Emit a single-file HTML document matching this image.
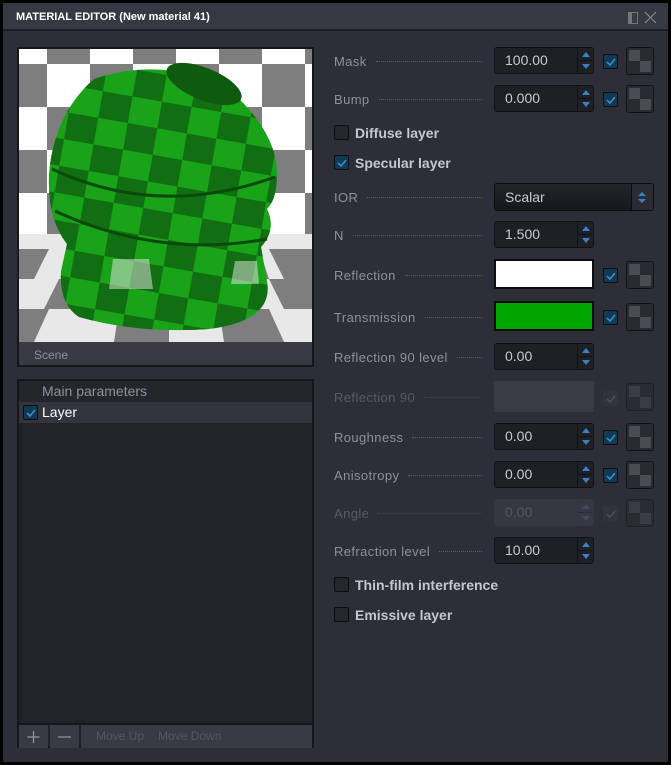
<!DOCTYPE html>
<html><head><meta charset="utf-8"><style>
*{box-sizing:border-box;margin:0;padding:0}
body{width:671px;height:765px;background:#000;font-family:"Liberation Sans",sans-serif;overflow:hidden;position:relative}
.win{position:absolute;left:3px;top:3px;width:665px;height:759px;background:#2d2e37}
.title{position:absolute;left:0;top:0;width:665px;height:28px;background:#373842;border-bottom:2px solid #1c1d22;color:#fff;font-weight:bold;font-size:11px;line-height:28px;padding-left:13px}
.a{position:absolute}
.lbl{position:absolute;left:334px;width:148px;font-size:13px;letter-spacing:.4px;color:#8e909a;display:flex;align-items:center;height:20px;white-space:nowrap}
.lbl:after{content:"";flex:1;margin-left:9px;border-top:1px dotted #5b5d66;height:0;margin-top:1px}
.inp{position:absolute;left:494px;width:100px;height:27px;background:#1f2026;border:1px solid #121317;border-radius:3px;color:#c9cad0;font-size:14px;line-height:25px;padding-left:10px}
.spin{position:absolute;right:0;top:0;width:16px;height:25px;border-left:1px solid #121317}
.spin:before{content:"";position:absolute;left:4px;top:4px;border:4px solid transparent;border-bottom:5px solid #3b7fc4;border-top:0}
.spin:after{content:"";position:absolute;left:4px;bottom:4px;border:4px solid transparent;border-top:5px solid #3b7fc4;border-bottom:0}
.spin i{position:absolute;left:0;right:0;top:12px;border-top:1px solid #121317}
.cb{position:absolute;width:15px;height:15px;background:#123a52;border:1px solid #0c0d10;border-radius:2px}
.cb svg{position:absolute;left:1px;top:1px}
.cb.off{background:#26272d}
.tex{position:absolute;left:626px;width:28px;height:28px;border:1px solid #121317;border-radius:3px;background:#2a2b31;overflow:hidden}
.tex:before{content:"";position:absolute;left:2px;top:2px;width:11px;height:11px;background:#4a4b53}
.tex:after{content:"";position:absolute;left:13px;top:13px;width:11px;height:11px;background:#4a4b53}
.dis{opacity:.45}
.big{position:absolute;left:355px;font-size:14px;font-weight:bold;color:#c6c7cc}
</style></head><body>
<div class="win">
<div class="title">MATERIAL EDITOR (New material 41)
<div class="a" style="left:625px;top:9px;width:10px;height:12px;border:1px solid #777;border-left:4px solid #777"></div>
<svg class="a" style="left:641px;top:8px" width="13" height="13"><path d="M1 1L12 12M12 1L1 12" stroke="#888" stroke-width="1.2"/></svg>
</div>
</div>
<!-- preview -->
<div class="a" style="left:17px;top:47px;width:297px;height:320px;background:#393a44;border:2px solid #16171b">
<svg width="293" height="293" style="display:block;background:#fff">
<defs>
<pattern id="ck" width="86" height="86" patternUnits="userSpaceOnUse" x="28" y="-28"><rect width="43" height="43" fill="#7e7e7e"/><rect x="43" y="43" width="43" height="43" fill="#7e7e7e"/></pattern>
<pattern id="ck2" width="60" height="54" patternUnits="userSpaceOnUse" patternTransform="rotate(10)"><rect width="30" height="27" fill="#126e12"/><rect x="30" y="27" width="30" height="27" fill="#126e12"/></pattern>
</defs>
<rect width="293" height="293" fill="url(#ck)"/>
<rect y="185" width="293" height="108" fill="#e8e8e8"/>
<g fill="#7e7e7e"><polygon points="0,200 30,200 15,230 0,230"/><polygon points="60,200 100,200 90,230 45,230"/><polygon points="0,260 30,260 15,293 0,293"/><polygon points="100,260 150,260 150,293 95,293"/><polygon points="200,260 250,260 265,293 205,293"/><polygon points="250,200 293,200 293,230 265,230"/><polygon points="190,200 240,200 250,230 200,230"/><polygon points="40,230 90,230 80,260 25,260"/><polygon points="150,230 200,230 205,260 150,260"/><polygon points="250,230 293,230 293,260 265,260"/></g>
<path d="M75 30 Q150 5 215 45 Q258 85 258 125 Q258 150 248 160 Q258 180 242 198 L248 232 Q255 272 190 280 Q120 285 60 268 Q40 255 42 222 L48 195 Q28 170 30 125 Q35 65 75 30Z" fill="#18a318"/>
<path d="M75 30 Q150 5 215 45 Q258 85 258 125 Q258 150 248 160 Q258 180 242 198 L248 232 Q255 272 190 280 Q120 285 60 268 Q40 255 42 222 L48 195 Q28 170 30 125 Q35 65 75 30Z" fill="url(#ck2)"/>
<ellipse cx="185" cy="35" rx="40" ry="16" transform="rotate(22 185 35)" fill="#0e5a0e"/>
<path d="M33 120 Q140 170 256 128 M36 162 Q140 210 248 190" stroke="#0a4a0a" stroke-width="3" fill="none"/>
<path d="M90 240 L94 210 L130 210 L134 240Z M212 235 L216 212 L238 212 L240 235Z" fill="#e8e8e8" opacity=".5"/>
</svg>
<div style="color:#8e909a;font-size:12px;padding:6px 0 0 15px">Scene</div>
</div>
<!-- list -->
<div class="a" style="left:17px;top:379px;width:297px;height:369px;background:#222328;border:2px solid #16171b">
<div style="height:21px;background:#25262c;color:#8e909a;font-size:14px;line-height:21px;padding-left:23px">Main parameters</div>
<div style="height:21px;background:#33343e;color:#fff;font-size:14px;line-height:21px;padding-left:23px;position:relative">Layer
<div class="cb" style="left:4px;top:3px"><svg width="12" height="12"><path d="M2 6L5 9L10 3" stroke="#3b8fd6" stroke-width="1.5" fill="none"/></svg></div></div>
<div class="a" style="left:0;top:342px;width:293px;height:2px;background:#16171b"></div>
<div class="a" style="left:0;top:344px;width:29px;height:23px;background:#393a44"><svg width="29" height="23"><path d="M14.5 6V18M8.5 12H20.5" stroke="#999" stroke-width="1.2"/></svg></div>
<div class="a" style="left:31px;top:344px;width:29px;height:23px;background:#393a44"><svg width="29" height="23"><path d="M8 12H21" stroke="#999" stroke-width="1.2"/></svg></div>
<div class="a" style="left:62px;top:344px;width:231px;height:23px;background:#393a44;color:#55565f;font-size:12px;line-height:23px;padding-left:15px"><span>Move Up</span><span style="margin-left:14px">Move Down</span></div>
</div>

<!-- right -->
<div class="lbl" style="top:51px">Mask</div>
<div class="inp" style="top:47px">100.00<div class="spin"><i></i></div></div>
<div class="cb" style="left:603px;top:54px"><svg width="12" height="12"><path d="M2 6L5 9L10 3" stroke="#3b8fd6" stroke-width="1.5" fill="none"/></svg></div>
<div class="tex" style="top:47px"></div>

<div class="lbl" style="top:89px">Bump</div>
<div class="inp" style="top:85px">0.000<div class="spin"><i></i></div></div>
<div class="cb" style="left:603px;top:92px"><svg width="12" height="12"><path d="M2 6L5 9L10 3" stroke="#3b8fd6" stroke-width="1.5" fill="none"/></svg></div>
<div class="tex" style="top:85px"></div>

<div class="cb off" style="left:334px;top:125px"></div><div class="big" style="top:125px">Diffuse layer</div>
<div class="cb" style="left:334px;top:155px"><svg width="12" height="12"><path d="M2 6L5 9L10 3" stroke="#3b8fd6" stroke-width="1.5" fill="none"/></svg></div><div class="big" style="top:155px">Specular layer</div>

<div class="lbl" style="top:187px">IOR</div>
<div class="a" style="left:494px;top:183px;width:160px;height:28px;background:linear-gradient(#24252b,#17181c);border:1px solid #0c0d10;border-radius:3px;color:#c9cad0;font-size:14px;line-height:26px;padding-left:10px">Scalar
<div class="a" style="right:0;top:0;width:22px;height:26px;border-left:1px solid #0c0d10;background:#2a2b33"></div>
<svg class="a" style="right:6px;top:7px" width="10" height="13"><path d="M1 5L5 1L9 5ZM1 8L5 12L9 8Z" fill="#3b7fc4"/></svg></div>

<div class="lbl" style="top:225px">N</div>
<div class="inp" style="top:221px">1.500<div class="spin"><i></i></div></div>

<div class="lbl" style="top:265px">Reflection</div>
<div class="a" style="left:494px;top:259px;width:100px;height:30px;background:#fff;border:2px solid #0c0d10"></div>
<div class="cb" style="left:603px;top:268px"><svg width="12" height="12"><path d="M2 6L5 9L10 3" stroke="#3b8fd6" stroke-width="1.5" fill="none"/></svg></div>
<div class="tex" style="top:261px"></div>

<div class="lbl" style="top:307px">Transmission</div>
<div class="a" style="left:494px;top:301px;width:100px;height:30px;background:#00a500;border:2px solid #0c0d10"></div>
<div class="cb" style="left:603px;top:310px"><svg width="12" height="12"><path d="M2 6L5 9L10 3" stroke="#3b8fd6" stroke-width="1.5" fill="none"/></svg></div>
<div class="tex" style="top:303px"></div>

<div class="lbl" style="top:347px">Reflection 90 level</div>
<div class="inp" style="top:343px">0.00<div class="spin"><i></i></div></div>

<div class="lbl dis" style="top:387px">Reflection 90</div>
<div class="a" style="left:494px;top:381px;width:100px;height:31px;background:#3a3b45"></div>
<div class="cb dis" style="left:603px;top:391px;background:#3a3b45;border-color:#3a3b45"><svg width="12" height="12"><path d="M2 6L5 9L10 3" stroke="#777" stroke-width="1.5" fill="none"/></svg></div>
<div class="tex" style="top:383px;opacity:.5"></div>

<div class="lbl" style="top:427px">Roughness</div>
<div class="inp" style="top:423px">0.00<div class="spin"><i></i></div></div>
<div class="cb" style="left:603px;top:430px"><svg width="12" height="12"><path d="M2 6L5 9L10 3" stroke="#3b8fd6" stroke-width="1.5" fill="none"/></svg></div>
<div class="tex" style="top:423px"></div>

<div class="lbl" style="top:465px">Anisotropy</div>
<div class="inp" style="top:461px">0.00<div class="spin"><i></i></div></div>
<div class="cb" style="left:603px;top:468px"><svg width="12" height="12"><path d="M2 6L5 9L10 3" stroke="#3b8fd6" stroke-width="1.5" fill="none"/></svg></div>
<div class="tex" style="top:461px"></div>

<div class="lbl dis" style="top:503px">Angle</div>
<div class="inp" style="top:499px;background:#363740;border-color:#363740;color:#555660">0.00<div class="spin" style="border-color:#2f3038;opacity:.3"><i></i></div></div>
<div class="cb dis" style="left:603px;top:506px;background:#3a3b45;border-color:#3a3b45"><svg width="12" height="12"><path d="M2 6L5 9L10 3" stroke="#777" stroke-width="1.5" fill="none"/></svg></div>
<div class="tex" style="top:499px;opacity:.5"></div>

<div class="lbl" style="top:541px">Refraction level</div>
<div class="inp" style="top:537px">10.00<div class="spin"><i></i></div></div>

<div class="cb off" style="left:334px;top:577px"></div><div class="big" style="top:577px">Thin-film interference</div>
<div class="cb off" style="left:334px;top:607px"></div><div class="big" style="top:607px">Emissive layer</div>
</body></html>
